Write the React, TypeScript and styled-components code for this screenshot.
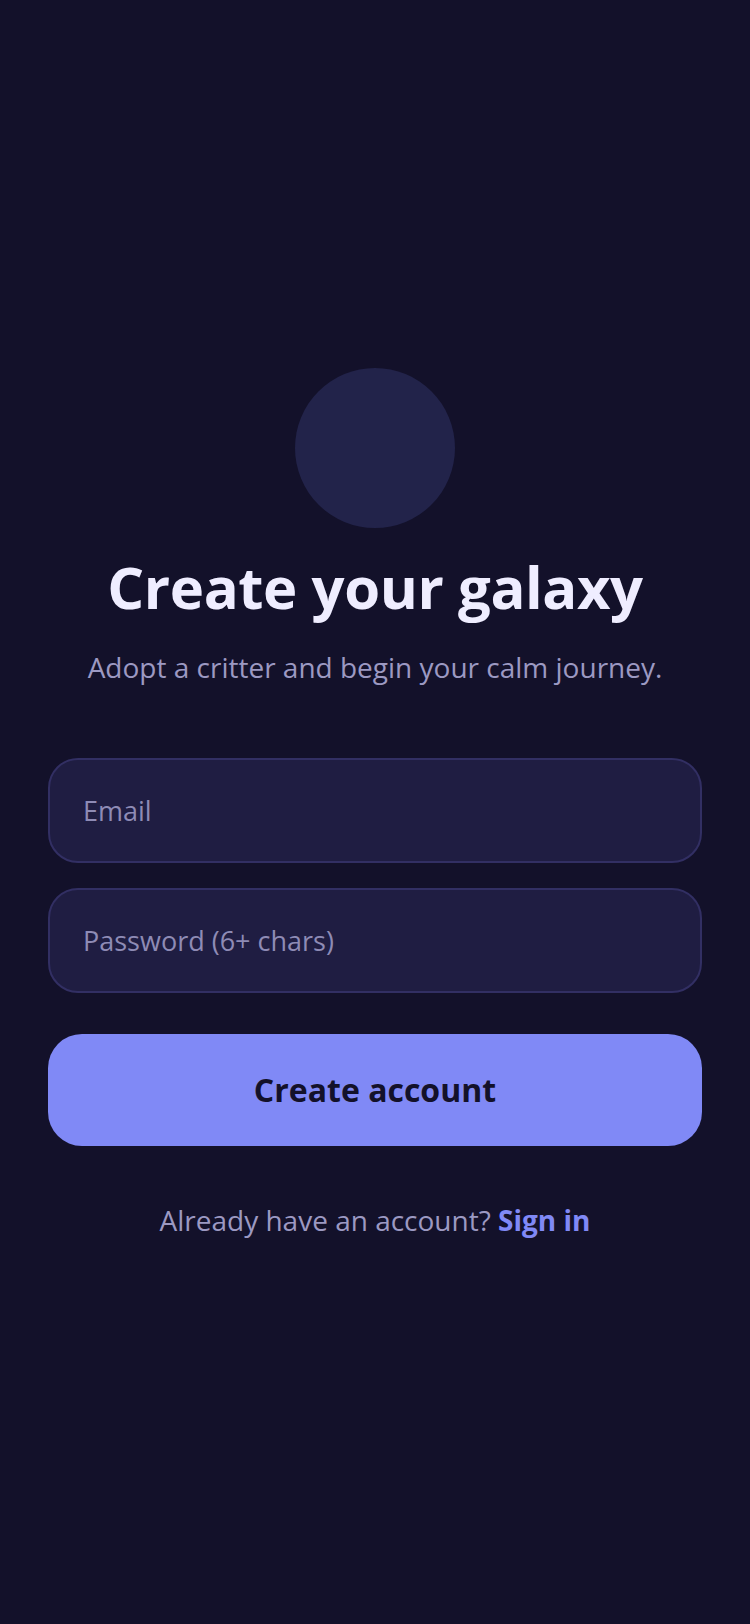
import React from "react";
import styled, { createGlobalStyle } from "styled-components";

const GlobalStyle = createGlobalStyle`
    html, body {
        margin: 0;
        padding: 0;
        background: #13112a;
    }
    * {
        box-sizing: border-box;
    }
`;

const Page = styled.div`
    min-height: 100vh;
    display: flex;
    flex-direction: column;
    align-items: center;
    padding: 368px 48px 0;
    font-family: "Open Sans", "Noto Sans", sans-serif;
`;

const Avatar = styled.div`
    width: 160px;
    height: 160px;
    border-radius: 50%;
    background: #22234a;
`;

const Title = styled.h1`
    margin: 24px 0 0;
    font-size: 58px;
    line-height: 1.2;
    font-weight: 700;
    color: #efedff;
    letter-spacing: -0.4px;
`;

const Subtitle = styled.p`
    margin: 27px 0 0;
    font-size: 28px;
    line-height: 1.3;
    color: #9c99c2;
`;

const Form = styled.form`
    width: 100%;
    margin-top: 73px;
    display: flex;
    flex-direction: column;
    gap: 25px;
`;

const Field = styled.input`
    width: 100%;
    height: 105px;
    padding: 0 33px;
    border-radius: 30px;
    border: 2px solid #322f63;
    background: #1f1d42;
    color: #efedff;
    font-family: inherit;
    font-size: 27px;
    outline: none;

    &::placeholder {
        color: #8e8bb5;
    }
`;

const Submit = styled.button`
    width: 100%;
    height: 112px;
    margin-top: 16px;
    border: none;
    border-radius: 34px;
    background: #8089f6;
    color: #13112a;
    font-family: inherit;
    font-size: 32px;
    font-weight: 700;
`;

const Footer = styled.p`
    margin: 55px 0 0;
    font-size: 28px;
    color: #9c99c2;
`;

const SignIn = styled.a`
    color: #8089f6;
    font-weight: 700;
    text-decoration: none;
`;

export default function App(): JSX.Element {
    return (
        <>
            <GlobalStyle />
            <Page>
                <Avatar />
                <Title>Create your galaxy</Title>
                <Subtitle>Adopt a critter and begin your calm journey.</Subtitle>
                <Form onSubmit={(e) => e.preventDefault()}>
                    <Field type="email" placeholder="Email" />
                    <Field type="password" placeholder="Password (6+ chars)" />
                    <Submit type="submit">Create account</Submit>
                </Form>
                <Footer>
                    Already have an account? <SignIn href="#">Sign in</SignIn>
                </Footer>
            </Page>
        </>
    );
}
